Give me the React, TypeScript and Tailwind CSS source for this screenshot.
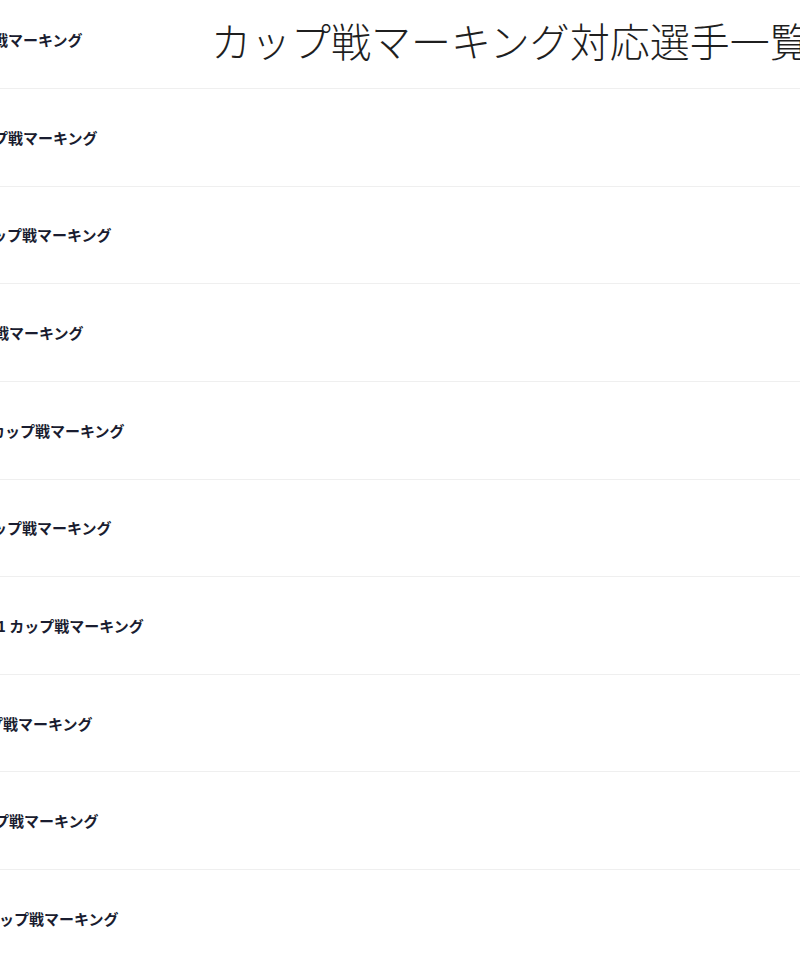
import React from "react";

const rows: { text: string; ml: string }[] = [
  { text: "カップ戦マーキング", ml: "ml-[-52px]" },
  { text: "カップ戦マーキング", ml: "ml-[-37px]" },
  { text: "カップ戦マーキング", ml: "ml-[-23px]" },
  { text: "カップ戦マーキング", ml: "ml-[-51px]" },
  { text: "カップ戦マーキング", ml: "ml-[-10px]" },
  { text: "カップ戦マーキング", ml: "ml-[-23px]" },
  { text: "1 カップ戦マーキング", ml: "ml-[-3px]" },
  { text: "カップ戦マーキング", ml: "ml-[-42px]" },
  { text: "カップ戦マーキング", ml: "ml-[-36px]" },
  { text: "カップ戦マーキング", ml: "ml-[-16px]" },
];

export default function App() {
  return (
    <div
      className="w-[800px] h-[960px] overflow-hidden bg-white"
      style={{ fontFamily: '"Noto Sans CJK JP", "Noto Sans", sans-serif' }}
    >
      <div className="-mt-[8.6px]">
        {rows.map((r, i) => (
          <div
            key={i}
            className="relative flex h-[97.625px] items-center border-b border-[#efefef] whitespace-nowrap"
          >
            <span
              className={`${r.ml} text-[15px] font-bold leading-none text-[#1a1d30] tracking-normal`}
            >
              {r.text}
            </span>
            {i === 0 && (
              <h1 className="absolute left-[211px] top-1/2 -translate-y-1/2 text-[40px] font-light leading-none text-[#1f1f1f]">
                カップ戦マーキング対応選手一覧
              </h1>
            )}
          </div>
        ))}
      </div>
    </div>
  );
}
